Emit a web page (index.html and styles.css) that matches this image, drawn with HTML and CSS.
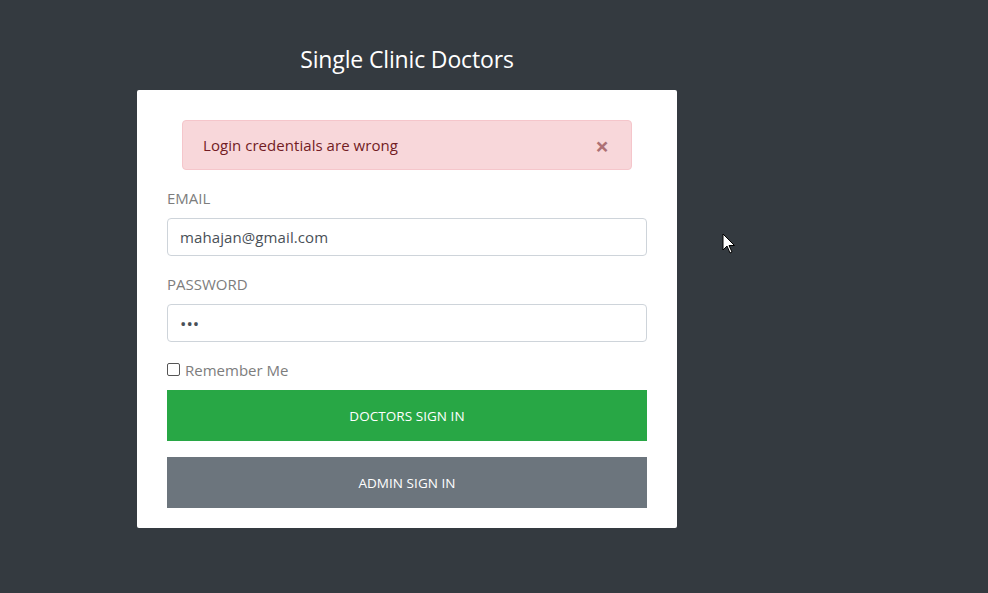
FILE: index.html
```html
<!DOCTYPE html>
<html>
<head>
<meta charset="utf-8">
<link rel="stylesheet" href="styles.css">
</head>
<body>
<div class="page">
  <div class="col">
    <h2 class="title">Single Clinic Doctors</h2>
    <div class="card">
      <div class="alert">
        <span>Login credentials are wrong</span>
        <span class="close">&times;</span>
      </div>
      <div class="group">
        <label class="label">EMAIL</label>
        <div class="input">mahajan@gmail.com</div>
      </div>
      <div class="group">
        <label class="label">PASSWORD</label>
        <div class="input pw">&bull;&bull;&bull;</div>
      </div>
      <div class="check">
        <span class="box"></span>
        <span>Remember Me</span>
      </div>
      <div class="btn green">DOCTORS SIGN IN</div>
      <div class="btn gray">ADMIN SIGN IN</div>
    </div>
  </div>
</div>
<svg class="cursor" width="14" height="22" viewBox="0 0 14 22">
  <path d="M1 1 L1 17 L5 13 L8 20 L10 19 L7 12.5 L12.5 12.5 Z" fill="#fff" stroke="#000" stroke-width="1"/>
</svg>
</body>
</html>
```
FILE: styles.css
```css
* { box-sizing: border-box; }
html, body { margin: 0; padding: 0; }
body {
  background: #343a40;
  width: 988px;
  height: 593px;
  overflow: hidden;
  font-family: "Open Sans", "Noto Sans", sans-serif;
  position: relative;
}
.page {
  padding-left: 137px;
  padding-top: 40px;
}
.col { width: 540px; }
.title {
  margin: 0;
  height: 50px;
  color: #fff;
  font-weight: 400;
  font-size: 23px;
  line-height: 38px;
  text-align: center;
  letter-spacing: -0.15px;
}
.card {
  background: #fff;
  border-radius: 2px;
  padding: 30px 30px 20px;
}
.alert {
  margin: 0 15px 16px;
  height: 50px;
  background: #f8d7da;
  border: 1px solid #f5c6cb;
  border-radius: 4px;
  color: #721c24;
  font-size: 15px;
  display: flex;
  align-items: center;
  justify-content: space-between;
  padding: 0 22px 0 20px;
  letter-spacing: 0.05px;
}
.close {
  font-size: 24px;
  font-weight: 700;
  color: #721c24;
  opacity: 0.55;
  line-height: 1;
  margin-top: 2px;
}
.group { margin-bottom: 16px; }
.label {
  display: block;
  color: #7d7d7d;
  font-size: 15px;
  line-height: 24px;
  margin-bottom: 8px;
}
.input {
  height: 38px;
  border: 1px solid #ced4da;
  border-radius: 4px;
  padding: 0 12px;
  display: flex;
  align-items: center;
  color: #495057;
  font-size: 15px;
  letter-spacing: 0.1px;
}
.input.pw { font-size: 17px; letter-spacing: 0; padding-left: 12px; }
.check {
  display: flex;
  align-items: center;
  height: 24px;
  margin-bottom: 8px;
  color: #7d7d7d;
  font-size: 15px;
}
.box {
  width: 13px;
  height: 13px;
  border: 1px solid #555;
  border-radius: 2px;
  margin-right: 5px;
  margin-top: -1px;
}
.btn {
  height: 51px;
  display: flex;
  align-items: center;
  justify-content: center;
  color: #fff;
  font-size: 13.5px;
  letter-spacing: 0.05px;
}
.btn.green { background: #28a745; margin-bottom: 16px; }
.btn.gray { background: #6c757d; }
.cursor {
  position: absolute;
  left: 722px;
  top: 233px;
}
```
